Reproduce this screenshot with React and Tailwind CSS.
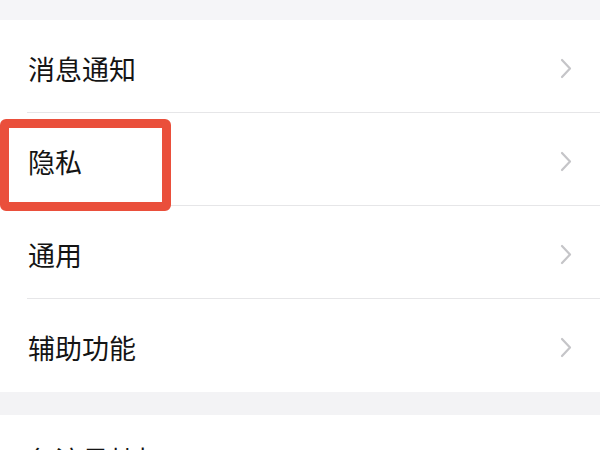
const items = ['消息通知', '隐私', '通用', '辅助功能']

function Chevron() {
  return (
    <svg width="12" height="21" viewBox="0 0 12 21" fill="none" className="shrink-0">
      <polyline points="2,2 10,10.5 2,19" stroke="#c5c5c8" strokeWidth="2.2" strokeLinecap="round" strokeLinejoin="round" />
    </svg>
  )
}

function Row({ label, last }) {
  return (
    <div className="flex h-[93px] pl-[27px]">
      <div className={'flex flex-1 items-center justify-between pr-[28px] pt-[4px] ' + (last ? '' : 'border-b border-[#e6e6e8]')}>
        <span className="text-[27px] text-[#141414] leading-none pl-[1px]">{label}</span>
        <Chevron />
      </div>
    </div>
  )
}

export default function App() {
  return (
    <div
      className="relative w-[600px] h-[450px] overflow-hidden bg-[#f4f4f6]"
      style={{ fontFamily: '"Noto Sans CJK SC", "Noto Sans", sans-serif' }}
    >
      <div className="h-[20px] bg-[#f5f5f8]" />
      <div className="bg-white">
        {items.map((label, i) => (
          <Row key={label} label={label} last={i === items.length - 1} />
        ))}
      </div>
      <div className="h-[23px] bg-[#f3f3f5]" />
      <div className="bg-white h-[100px] pl-[28px] pt-[31px]">
        <span className="text-[27px] text-[#141414] leading-none">免流量特权</span>
      </div>

      {/* highlight box */}
      <div className="absolute left-0 top-[119px] w-[171px] h-[92px] border-[9px] border-[#ea4f3b] rounded-[6px]" />
    </div>
  )
}
